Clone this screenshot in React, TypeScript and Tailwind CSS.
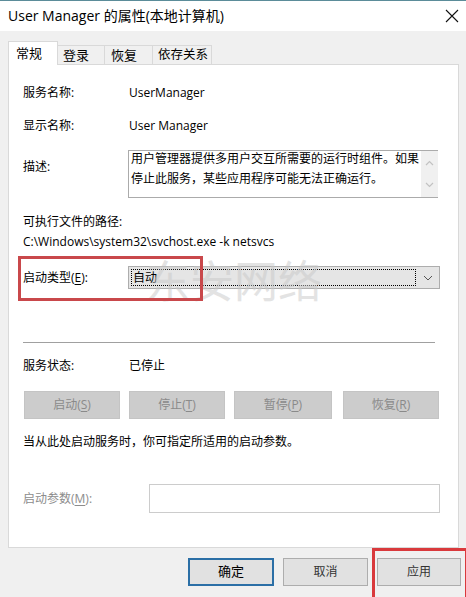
import React from "react";

const font = {
  fontFamily: '"Open Sans", "Noto Sans CJK SC", sans-serif',
};

function U({ children }: { children: React.ReactNode }) {
  return <span className="underline underline-offset-2">{children}</span>;
}

const actions = [
  { label: "启动", key: "S", w: "w-[96px]" },
  { label: "停止", key: "T", w: "w-[96px]" },
  { label: "暂停", key: "P", w: "w-[98px]" },
  { label: "恢复", key: "R", w: "w-[96px]" },
];

export default function App() {
  return (
    <div
      className="relative w-[466px] h-[597px] overflow-hidden bg-[#f0f0f0] text-[12px] text-black"
      style={font}
    >
      {/* title bar */}
      <div className="h-[31px] bg-white border-t border-[#5b8c99] flex items-center justify-between pl-[8px] pr-[6px]">
        <span className="text-[14px] leading-none">User Manager 的属性(本地计算机)</span>
        <svg width="14" height="14" viewBox="0 0 14 14" className="mr-[1px]">
          <path d="M1 1 L13 13 M13 1 L1 13" stroke="#111" strokeWidth="1.1" />
        </svg>
      </div>

      {/* tabs */}
      <div className="flex items-end pl-[8px] h-[33px] whitespace-nowrap text-[13px]">
        <div className="relative z-10 -mb-px w-[50px] h-[24px] bg-white border border-b-0 border-[#d9d9d9] pl-[7px] pt-[2px] leading-[18px]">
          常规
        </div>
        <div className="-mb-px w-[47px] h-[20px] border border-l-0 border-[#d9d9d9] pl-[5px] leading-[18px]">
          登录
        </div>
        <div className="-mb-px w-[48px] h-[20px] border border-l-0 border-[#d9d9d9] pl-[6px] leading-[18px]">
          恢复
        </div>
        <div className="-mb-px w-[59px] h-[20px] border border-l-0 border-[#d9d9d9] pl-[5px] leading-[18px] text-[12.5px]">
          依存关系
        </div>
      </div>

      {/* panel */}
      <div className="ml-[8px] w-[451px] h-[484px] bg-white border border-[#d9d9d9] pl-[14px]">
        <div className="flex mt-[19px] leading-[18px]">
          <div className="w-[106px]">服务名称:</div>
          <div>UserManager</div>
        </div>
        <div className="flex mt-[15px] leading-[18px]">
          <div className="w-[106px]">显示名称:</div>
          <div>User Manager</div>
        </div>
        <div className="flex mt-[15px]">
          <div className="w-[105px] pt-[8px] leading-[18px]">描述:</div>
          <div className="w-[310px] h-[48px] border border-[#ababab] border-r-0 flex">
            <div className="flex-1 pl-[2px] leading-[20px] -mt-[2px]">
              用户管理器提供多用户交互所需要的运行时组件。如果停止此服务，某些应用程序可能无法正确运行。
            </div>
            <div className="w-[17px] bg-[#f0f0f0] flex flex-col items-center justify-between py-[9px]">
              <svg width="9" height="6" viewBox="0 0 9 6">
                <path d="M1 5 L4.5 1.5 L8 5" stroke="#c2c2c2" fill="none" strokeWidth="1.2" />
              </svg>
              <svg width="9" height="6" viewBox="0 0 9 6">
                <path d="M1 1 L4.5 4.5 L8 1" stroke="#c2c2c2" fill="none" strokeWidth="1.2" />
              </svg>
            </div>
          </div>
        </div>
        <div className="mt-[15px] leading-[18px]">可执行文件的路径:</div>
        <div className="mt-[2px] leading-[18px]">C:\Windows\system32\svchost.exe -k netsvcs</div>
        <div className="flex items-center mt-[15px]">
          <div className="w-[105px] leading-[18px]">
            启动类型(<U>E</U>):
          </div>
          <div className="w-[312px] h-[23px] bg-[#e5e5e5] border border-[#adadad] flex items-center pl-[2px] pr-[6px]">
            <div className="flex-1 h-[17px] border border-dotted border-black pl-[1px] leading-[15px]">
              自动
            </div>
            <svg width="10" height="6" viewBox="0 0 10 6" className="ml-[7px]">
              <path d="M1 1 L5 5 L9 1" stroke="#555" fill="none" strokeWidth="1" />
            </svg>
          </div>
        </div>
        <div className="mt-[53px] w-[412px] h-px bg-[#a0a0a0]" />
        <div className="flex mt-[14px] leading-[18px]">
          <div className="w-[106px]">服务状态:</div>
          <div>已停止</div>
        </div>
        <div className="flex gap-[9px] mt-[16px] ml-[1px]">
          {actions.map((a, i) => (
            <div
              key={a.key}
              className={`${a.w} ${i === 3 ? "ml-[2px]" : ""} h-[28px] bg-[#cccccc] border border-[#c4c4c4] flex items-center justify-center text-[#8a8a8a]`}
            >
              {a.label}(<U>{a.key}</U>)
            </div>
          ))}
        </div>
        <div className="mt-[14px] leading-[18px]">当从此处启动服务时，你可指定所适用的启动参数。</div>
        <div className="flex items-center mt-[33px]">
          <div className="w-[126px] text-[#8c8c8c] leading-[18px]">
            启动参数(<U>M</U>):
          </div>
          <div className="w-[291px] h-[29px] border border-[#cccccc]" />
        </div>
      </div>

      {/* dialog buttons */}
      <div className="flex justify-end mt-[10px] pr-[5px] gap-[9px]">
        <div className="w-[86px] h-[28px] bg-[#e1e1e1] border-2 border-[#2b6fa6] flex items-center justify-center text-[13px]">
          确定
        </div>
        <div className="w-[85px] h-[28px] bg-[#e1e1e1] border border-[#adadad] flex items-center justify-center text-[12px] text-[#333]">
          取消
        </div>
        <div className="w-[84px] h-[28px] bg-[#e1e1e1] border border-[#adadad] flex items-center justify-center text-[12px] text-[#333]">
          应用
        </div>
      </div>

      {/* watermark */}
      <div className="pointer-events-none absolute left-[146px] top-[259px] text-[44px] leading-none text-[#c8c8c8] opacity-50">
        东安网络
      </div>

      {/* red highlight boxes */}
      <div className="pointer-events-none absolute left-[18px] top-[256px] w-[185px] h-[45px] border-[3px] border-[#c9484b]" />
      <div className="pointer-events-none absolute left-[372px] top-[548px] w-[96px] h-[52px] border-[3px] border-[#d9393c]" />
    </div>
  );
}
